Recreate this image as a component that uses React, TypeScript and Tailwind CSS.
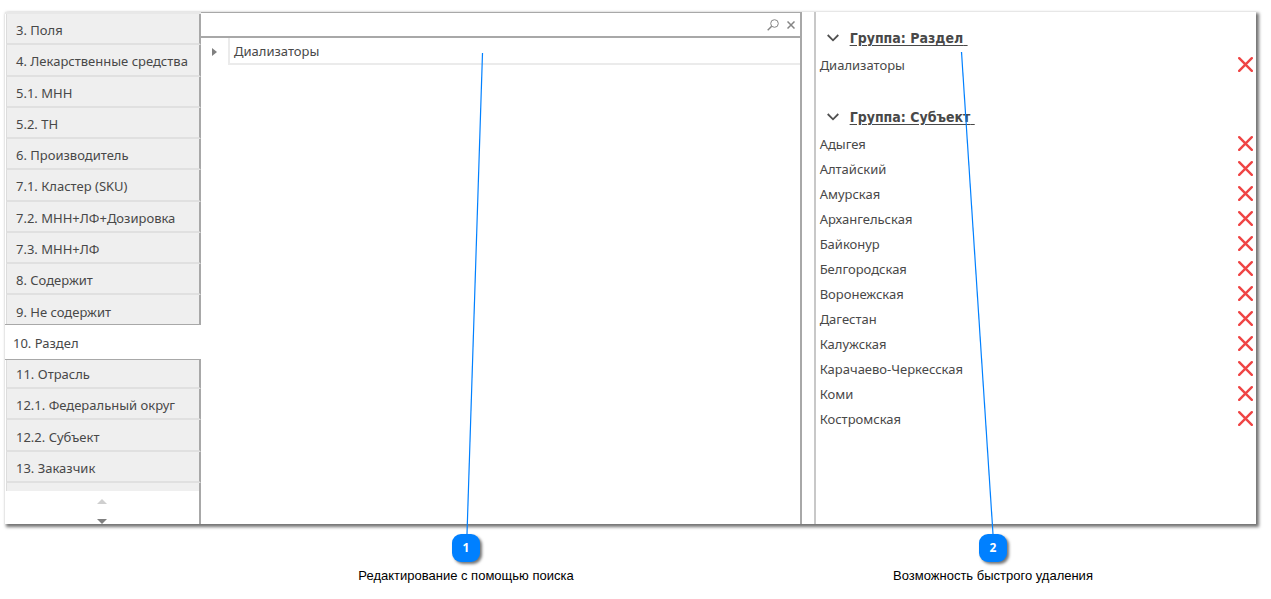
import clsx from 'clsx';

const sections = [
  '3. Поля',
  '4. Лекарственные средства',
  '5.1. МНН',
  '5.2. ТН',
  '6. Производитель',
  '7.1. Кластер (SKU)',
  '7.2. МНН+ЛФ+Дозировка',
  '7.3. МНН+ЛФ',
  '8. Содержит',
  '9. Не содержит',
  '10. Раздел',
  '11. Отрасль',
  '12.1. Федеральный округ',
  '12.2. Субъект',
  '13. Заказчик',
];

const activeSection = '10. Раздел';

const groups = [
  { title: 'Группа: Раздел', items: ['Диализаторы'] },
  {
    title: 'Группа: Субъект',
    items: [
      'Адыгея',
      'Алтайский',
      'Амурская',
      'Архангельская',
      'Байконур',
      'Белгородская',
      'Воронежская',
      'Дагестан',
      'Калужская',
      'Карачаево-Черкесская',
      'Коми',
      'Костромская',
    ],
  },
];

const notes = [
  { id: 1, text: 'Редактирование с помощью поиска', grow: 'flex-[528]' },
  { id: 2, text: 'Возможность быстрого удаления', grow: 'flex-[526]' },
];

function Sidebar() {
  return (
    <nav className="flex w-[196px] shrink-0 flex-col">
      <ul className="grid h-[471px] auto-rows-fr border-t-2 border-[#e8e8e8]">
        {sections.map((name) => {
          const active = name === activeSection;
          return (
            <li key={name} className={clsx('flex', active && 'relative -mb-[2px] -mt-[3px]')}>
              <button
                type="button"
                className={clsx(
                  'flex-1 whitespace-nowrap pt-[3px] text-left',
                  active
                    ? 'border-y border-[#a8a8a8] bg-white pl-2'
                    : 'ml-px border-b-2 border-l border-r-2 border-b-[#e0e0e0] border-l-[#dcdcdc] border-r-[#a8a8a8] bg-[#efefef] pl-[9px]'
                )}
              >
                {name}
              </button>
            </li>
          );
        })}
      </ul>
      <div className="ml-px h-2 border-l border-r-2 border-l-[#dcdcdc] border-r-[#a8a8a8] bg-[#efefef]" />
      <div className="flex flex-1 flex-col items-center justify-between border-r-2 border-[#a8a8a8] pt-2">
        <button type="button" aria-label="Прокрутить вверх">
          <svg width="10" height="5" viewBox="0 0 10 5" className="block fill-[#cfcfcf]">
            <path d="M5 0 L10 5 H0 Z" />
          </svg>
        </button>
        <button type="button" aria-label="Прокрутить вниз">
          <svg width="10" height="5" viewBox="0 0 10 5" className="block fill-[#808080]">
            <path d="M0 0 H10 L5 5 Z" />
          </svg>
        </button>
      </div>
    </nav>
  );
}

function SearchPanel() {
  return (
    <section className="flex min-w-0 flex-[605] flex-col border-r-2 border-t border-[#a8a8a8]">
      <div className="flex h-[25px] items-center border-b-2 border-[#a8a8a8] pr-[5px]">
        <input type="text" aria-label="Поиск" className="min-w-0 flex-1 px-2 outline-none" />
        <button type="button" aria-label="Найти">
          <svg
            width="12"
            height="12"
            viewBox="0 0 12 12"
            className="block fill-none stroke-[#858585]"
          >
            <circle cx="7.5" cy="4.5" r="3.8" />
            <path d="M4.7 7.3 L0.7 11.2" strokeWidth="1.4" />
          </svg>
        </button>
        <button type="button" aria-label="Очистить" className="ml-2">
          <svg width="8" height="8" viewBox="0 0 8 8" className="block stroke-[#858585]">
            <path d="M0.5 0.5 L7.5 7.5 M7.5 0.5 L0.5 7.5" strokeWidth="1.5" />
          </svg>
        </button>
      </div>
      <div className="flex h-[27px]">
        <button type="button" aria-label="Развернуть" className="flex w-[27px] items-center pl-[11px]">
          <svg width="5" height="8" viewBox="0 0 5 8" className="block fill-[#808080]">
            <path d="M0 0 L5 4 L0 8 Z" />
          </svg>
        </button>
        <div className="flex flex-1 items-center border-b-2 border-l-2 border-[#ebebeb] pl-1">
          Диализаторы
        </div>
      </div>
    </section>
  );
}

function SelectionPanel() {
  return (
    <section className="ml-3 min-w-0 flex-[438] border-l-2 border-[#c8c8c8] pl-1 pr-[3px] pt-3">
      {groups.map((group) => (
        <div key={group.title} className="mb-[26px]">
          <h2>
            <button
              type="button"
              className="flex h-7 items-center pl-[7px] font-['DejaVu_Sans_Condensed','Noto_Sans',sans-serif] text-sm font-bold"
            >
              <svg
                width="12"
                height="8"
                viewBox="0 0 12 8"
                className="block fill-none stroke-[#505050]"
              >
                <path d="M0.7 1 L6 6.3 L11.3 1" strokeWidth="1.8" />
              </svg>
              <span className="ml-[11px] underline underline-offset-2">{group.title}&nbsp;</span>
            </button>
          </h2>
          <ul>
            {group.items.map((item) => (
              <li key={item} className="flex h-[25px] items-center justify-between">
                {item}
                <button type="button" aria-label={`Удалить ${item}`}>
                  <svg
                    width="15"
                    height="15"
                    viewBox="0 0 15 15"
                    className="block stroke-[#ef4444]"
                  >
                    <path
                      d="M1.2 1.2 L13.8 13.8 M13.8 1.2 L1.2 13.8"
                      strokeWidth="2.4"
                      strokeLinecap="round"
                    />
                  </svg>
                </button>
              </li>
            ))}
          </ul>
        </div>
      ))}
    </section>
  );
}

export default function App() {
  return (
    <div className="bg-white px-[15px] pl-[5px] pt-3 font-['Noto_Sans',sans-serif] text-[13px] leading-4 text-[#484848]">
      <div className="relative">
        <main className="flex h-[512px] shadow-[2px_2px_3px_1px_rgba(0,0,0,0.55)]">
          <Sidebar />
          <SearchPanel />
          <SelectionPanel />
        </main>

        {/* leader lines from the numbered notes up to the panels */}
        <svg
          className="pointer-events-none absolute left-0 top-0 h-[522px] w-full"
          viewBox="0 0 1251 522"
          preserveAspectRatio="none"
        >
          <g stroke="#0080ff" strokeWidth="1.2">
            <path d="M477.5 41 L462 522" vectorEffect="non-scaling-stroke" />
            <path d="M956.5 40 L988 522" vectorEffect="non-scaling-stroke" />
          </g>
        </svg>

        <ol className="flex pl-[197px] pt-[10px]">
          {notes.map((note) => (
            <li key={note.id} className={clsx('flex min-w-0 flex-col items-center', note.grow)}>
              <span className="flex size-7 items-center justify-center rounded-[9px] bg-[#0080ff] text-xs font-bold text-white shadow-[2px_2px_3px_rgba(0,0,0,0.55)]">
                {note.id}
              </span>
              <span className="mt-[6px] whitespace-nowrap font-['Liberation_Sans',Arial,sans-serif] text-black">
                {note.text}
              </span>
            </li>
          ))}
        </ol>
      </div>
    </div>
  );
}
